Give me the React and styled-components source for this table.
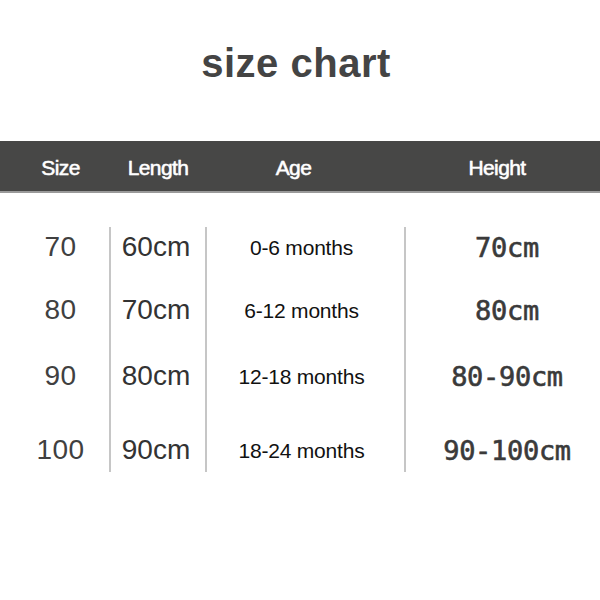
import React from 'react';
import styled, { createGlobalStyle } from 'styled-components';

const GlobalStyle = createGlobalStyle`
    html, body {
        margin: 0;
        padding: 0;
        background: #fff;
    }
    body {
        width: 600px;
        height: 600px;
        overflow: hidden;
    }
`;

const COLS = '109px 96px 199px 1fr';

const Page = styled.div`
    width: 600px;
    height: 600px;
    background: #fff;
    display: flex;
    flex-direction: column;
`;

const TitleBlock = styled.div`
    height: 141px;
    box-sizing: border-box;
    padding-top: 43px;
    display: flex;
    justify-content: center;
    .title {
        margin: 0;
        font-family: "Liberation Sans", Arial, sans-serif;
        font-weight: 700;
        font-size: 40px;
        line-height: 40px;
        letter-spacing: 0.5px;
        color: #444;
        padding-right: 8px;
    }
`;

const HeaderBar = styled.div`
    display: grid;
    grid-template-columns: ${COLS};
    height: 52px;
    box-sizing: border-box;
    background: #474746;
    border-bottom: 2px solid #9a9a9a;
    padding-top: 3px;
    align-items: center;
`;

const HeaderCell = styled.div`
    display: flex;
    justify-content: center;
    font-family: "Liberation Sans", Arial, sans-serif;
    font-size: 21px;
    letter-spacing: -0.6px;
    color: #fff;
    -webkit-text-stroke: 0.4px #fff;
    text-shadow: 0 0 1px rgba(255, 255, 255, 0.5);
    transform: translateX(${p => p.$dx || 0}px);
`;

const Body = styled.div`
    margin-top: 34px;
    display: flex;
    flex-direction: column;
`;

const Row = styled.div`
    display: grid;
    grid-template-columns: ${COLS};
    height: ${p => p.$h}px;
`;

const Cell = styled.div`
    display: flex;
    justify-content: center;
    align-items: flex-start;
    box-sizing: border-box;
    padding-top: ${p => p.$pt || 0}px;
    border-left: ${p => p.$first ? 'none' : '2px solid #c6c6c6'};
    .txt {
        height: 30px;
        display: flex;
        align-items: center;
        line-height: 1;
        transform: translateX(${p => p.$dx || 0}px);
    }
    .size {
        font-family: "Liberation Sans", Arial, sans-serif;
        font-size: 28px;
        color: #404040;
        letter-spacing: 0.5px;
    }
    .length {
        font-family: "Liberation Sans", Arial, sans-serif;
        font-size: 28px;
        color: #333;
    }
    .age {
        font-family: "Liberation Sans", Arial, sans-serif;
        font-size: 21px;
        color: #111;
        letter-spacing: -0.2px;
    }
    .height {
        font-family: "DejaVu Sans Mono", "Liberation Mono", monospace;
        font-size: 27px;
        color: #3a3a3a;
        letter-spacing: -0.3px;
        -webkit-text-stroke: 0.6px #3a3a3a;
    }
`;

const rows = [
    { size: '70', length: '60cm', age: '0-6 months', height: '70cm', h: 68, pt: 5 },
    { size: '80', length: '70cm', age: '6-12 months', height: '80cm', h: 66 },
    { size: '90', length: '80cm', age: '12-18 months', height: '80-90cm', h: 74 },
    { size: '100', length: '90cm', age: '18-24 months', height: '90-100cm', h: 37 },
];

const App = () => {
    return (
        <Page>
            <GlobalStyle />
            <TitleBlock>
                <h1 className='title'>size chart</h1>
            </TitleBlock>
            <HeaderBar>
                <HeaderCell $dx={6}>Size</HeaderCell>
                <HeaderCell $dx={1}>Length</HeaderCell>
                <HeaderCell $dx={-11}>Age</HeaderCell>
                <HeaderCell $dx={-5}>Height</HeaderCell>
            </HeaderBar>
            <Body>
                {rows.map(r => (
                    <Row key={r.size} $h={r.h}>
                        <Cell $first $pt={r.pt} $dx={6}><div className='txt size'>{r.size}</div></Cell>
                        <Cell $pt={r.pt} $dx={-2}><div className='txt length'>{r.length}</div></Cell>
                        <Cell $pt={r.pt} $dx={-4}><div className='txt age'>{r.age}</div></Cell>
                        <Cell $pt={r.pt} $dx={4}><div className='txt height'>{r.height}</div></Cell>
                    </Row>
                ))}
            </Body>
        </Page>
    );
};

export default App;
